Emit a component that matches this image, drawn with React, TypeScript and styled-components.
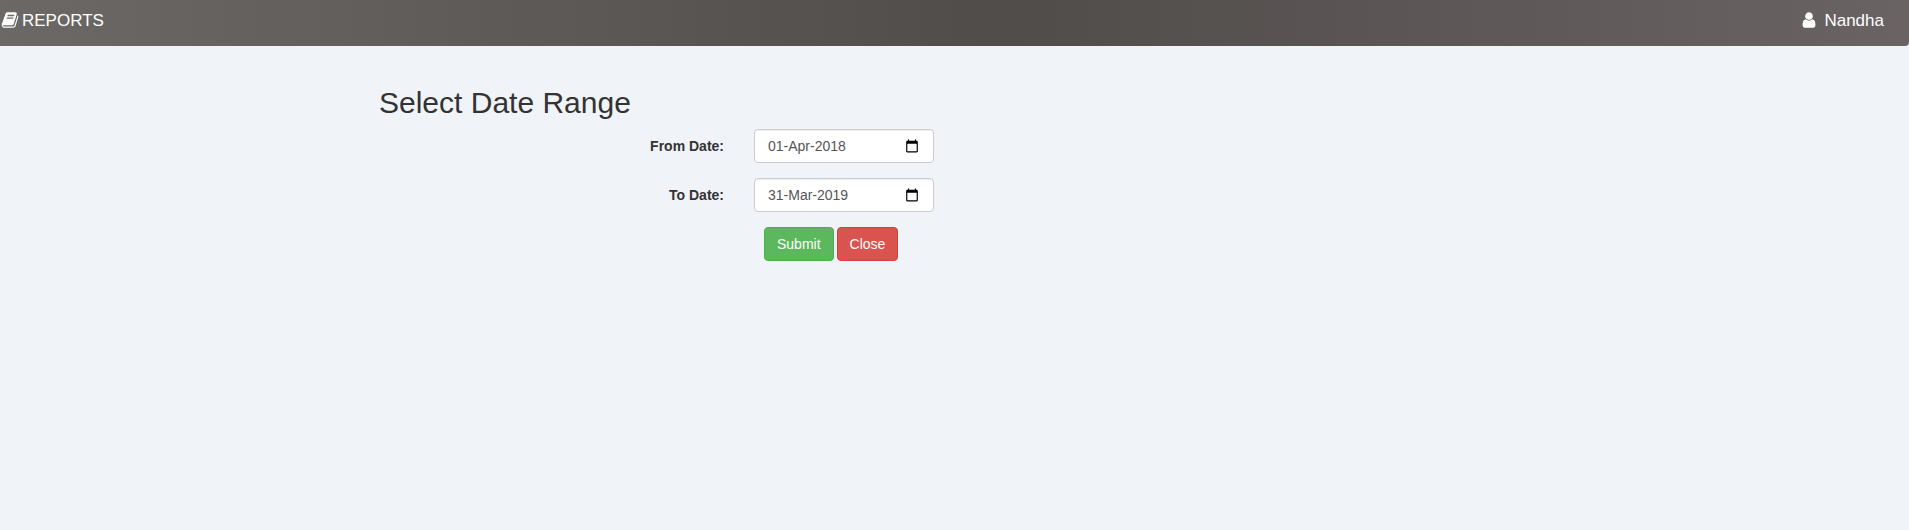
import React, { useState } from "react";
import styled, { createGlobalStyle } from "styled-components";

const GlobalStyle = createGlobalStyle`
  * { box-sizing: border-box; }
  body {
    margin: 0;
    min-height: 100vh;
    background: #f0f4f9;
    color: #333;
    font: 14px/20px "Liberation Sans", Arial, sans-serif;
  }
`;

const Navbar = styled.header`
  display: flex;
  justify-content: space-between;
  padding: 11px 25px 15px 1px;
  border-bottom-right-radius: 4px;
  background: linear-gradient(to right, #6b6866 0%, #514d4b 51%, #514d4b 54%, #696363 100%);
`;

const NavLink = styled.a<{ $gap: number }>`
  display: flex;
  align-items: flex-start;
  gap: ${(p) => p.$gap}px;
  color: #fff;
  font-size: 17px;
  text-decoration: none;
`;

const NavIcon = styled.svg`
  width: 18px;
  height: 18px;
  fill: currentColor;
`;

const Main = styled.main`
  max-width: 1151px;
  margin: 0 auto;
  padding-top: 40px;
`;

const Title = styled.h2`
  margin: 0 0 10px;
  font-size: 30px;
  font-weight: 400;
  line-height: 33px;
`;

const Form = styled.form`
  display: grid;
  grid-template-columns: minmax(100px, 345px) 180px;
  gap: 15px 30px;
  align-items: center;
`;

const Label = styled.label`
  font-weight: 700;
  text-align: right;
`;

const DateBox = styled.div`
  display: flex;
  align-items: center;
  height: 34px;
  padding: 0 14px 0 13px;
  border: 1px solid #ccc;
  border-radius: 4px;
  background: #fff;
  box-shadow: inset 0 1px 1px rgba(0, 0, 0, 0.075);
`;

const DateInput = styled.input`
  flex: 1;
  min-width: 0;
  padding: 0;
  border: 0;
  outline: 0;
  background: transparent;
  color: #555;
  font: inherit;
`;

const PickerButton = styled.button`
  display: flex;
  padding: 0;
  border: 0;
  background: transparent;
  color: #000;
  cursor: pointer;
`;

const Actions = styled.div`
  display: flex;
  grid-column: 2;
  gap: 3px;
  padding-left: 10px;
`;

const Button = styled.button<{ $fill: string; $edge: string }>`
  height: 34px;
  padding: 0 12px;
  border: 1px solid ${(p) => p.$edge};
  border-radius: 4px;
  background: ${(p) => p.$fill};
  color: #fff;
  font: inherit;
  cursor: pointer;
`;

function DateField({ id, label, initial }: { id: string; label: string; initial: string }) {
  const [value, setValue] = useState(initial);
  return (
    <>
      <Label htmlFor={id}>{label}</Label>
      <DateBox>
        <DateInput id={id} type="text" value={value} onChange={(e) => setValue(e.target.value)} />
        <PickerButton type="button" aria-label="Open calendar">
          <svg width="14" height="14" viewBox="0 0 24 24" fill="currentColor" aria-hidden="true">
            <path d="M20 3h-1V1h-2v2H7V1H5v2H4c-1.100 0-2 .9-2 2v16c0 1.100.9 2 2 2h16c1.100 0 2-.9 2-2V5c0-1.100-.9-2-2-2zm0 18H4V8h16v13z" />
          </svg>
        </PickerButton>
      </DateBox>
    </>
  );
}

export default function App() {
  return (
    <>
      <GlobalStyle />
      <Navbar>
        <NavLink href="#reports" $gap={3}>
          <NavIcon viewBox="0 0 1792 1792" aria-hidden="true">
            <path d="M1703 478q40 57 18 129l-275 906q-19 64-76.5 107.5t-122.5 43.5h-923q-77 0-148.5-53.5t-99.5-131.5q-24-67-2-127 0-4 3-27t4-37q1-8-3-21.5t-3-19.5q2-11 8-21t16.500-23.500 16.500-23.500q23-38 45-91.500t30-91.500q3-10 .5-30t-.5-28q3-11 17-28t17-23q21-36 42-92t25-90q1-9-2.500-32t.5-28q4-13 22-30.500t22-22.500q19-26 42.500-84.500t27.500-96.500q1-8-3-25.500t-2-26.500q2-8 9-18t18-23 17-21q8-12 16.500-30.500t15-35 16-36 19.500-32 26.500-23.500 36-11.500 47.500 5.500l-1 3q38-9 51-9h761q74 0 114 56t18 130l-274 906q-36 119-71.500 153.500t-128.500 34.500h-869q-27 0-38 15-11 16-1 43 24 70 144 70h923q29 0 56-15.500t35-41.500l300-987q7-22 5-57 38 15 59 43zm-1064 2q-4 13 2 22.500t20 9.500h608q13 0 25.500-9.500t16.500-22.500l21-64q4-13-2-22.500t-20-9.500h-608q-13 0-25.500 9.500t-16.500 22.500zm-83 256q-4 13 2 22.500t20 9.500h608q13 0 25.500-9.500t16.500-22.500l21-64q4-13-2-22.500t-20-9.500h-608q-13 0-25.500 9.500t-16.500 22.500z" />
          </NavIcon>
          REPORTS
        </NavLink>
        <NavLink href="#account" $gap={6}>
          <NavIcon viewBox="0 0 1792 1792" aria-hidden="true">
            <path d="M1536 1399q0 109-62.500 187t-150.500 78h-854q-88 0-150.500-78t-62.500-187q0-85 8.500-160.500t31.500-152 58.500-131 94-89 134.500-34.500q131 128 313 128t313-128q76 0 134.500 34.500t94 89 58.500 131 31.500 152 8.500 160.500zm-256-887q0 159-112.500 271.500t-271.500 112.500-271.500-112.500-112.500-271.500 112.500-271.500 271.500-112.500 271.500 112.500 112.500 271.500z" />
          </NavIcon>
          Nandha
        </NavLink>
      </Navbar>
      <Main>
        <Title>Select Date Range</Title>
        <Form onSubmit={(e) => e.preventDefault()}>
          <DateField id="from-date" label="From Date:" initial="01-Apr-2018" />
          <DateField id="to-date" label="To Date:" initial="31-Mar-2019" />
          <Actions>
            <Button type="submit" $fill="#5cb85c" $edge="#4cae4c">Submit</Button>
            <Button type="button" $fill="#d9534f" $edge="#d43f3a">Close</Button>
          </Actions>
        </Form>
      </Main>
    </>
  );
}
